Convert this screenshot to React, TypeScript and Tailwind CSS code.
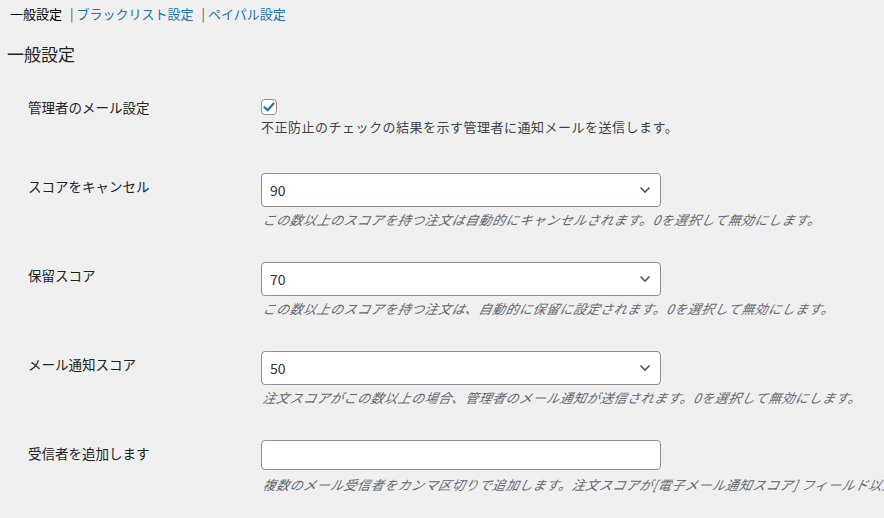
import React from "react";

const font = "font-['Noto_Sans_CJK_JP','Noto_Sans',sans-serif]";

const Chevron = () => (
  <svg width="12" height="8" viewBox="0 0 12 8" className="absolute right-[9px] top-1/2 -translate-y-1/2">
    <path d="M1.5 1.5 L6 6 L10.5 1.5" fill="none" stroke="#50575e" strokeWidth="1.6" />
  </svg>
);

const ScoreSelect = ({ value }: { value: string }) => (
  <div className="relative w-[400px] h-[34px] bg-white border border-[#8c8f94] rounded-[4px] flex items-center pl-[8px] text-[14px] text-[#2c3338]">
    {value}
    <Chevron />
  </div>
);

// Noto CJK has no italic, so slant it by hand
const Desc = ({ children, className = "" }: { children: React.ReactNode; className?: string }) => (
  <p
    className={`text-[13px] leading-[20px] tracking-[0.5px] italic text-[#646970] whitespace-nowrap -skew-x-12 origin-bottom-left ${className}`}
  >
    {children}
  </p>
);

const Row = ({ label, children, className = "" }: { label: string; children: React.ReactNode; className?: string }) => (
  <div className={`flex pl-[28px] ${className}`}>
    <div className="w-[233px] shrink-0 pt-[4px] text-[13.5px] leading-[18px] text-[#1d2327]">{label}</div>
    <div className="flex flex-col">{children}</div>
  </div>
);

const Sep = () => <span className="text-[#50575e] ml-[8px] mr-[3px]">|</span>;

export default function App() {
  return (
    <div className={`w-full h-[518px] overflow-hidden bg-[#f0f0f1] text-[#1d2327] ${font}`}>
      {/* tabs */}
      <div className="pt-[5px] pl-[10px] text-[13px] leading-[18px] whitespace-nowrap">
        <span className="text-[#000]">一般設定</span>
        <Sep />
        <span className="text-[#2271b1]">ブラックリスト設定</span>
        <Sep />
        <span className="text-[#2271b1]">ペイパル設定</span>
      </div>

      <h2 className="mt-[20px] pl-[7px] text-[17px] leading-[22px] text-[#1d2327]">一般設定</h2>

      {/* checkbox row */}
      <div className="flex pl-[28px] mt-[33px]">
        <div className="w-[233px] shrink-0 text-[13.5px] leading-[18px]">管理者のメール設定</div>
        <div className="flex flex-col">
          <div className="mt-[1px] w-[16px] h-[16px] bg-white border border-[#8c8f94] rounded-[4px] flex items-center justify-center">
            <svg width="12" height="10" viewBox="0 0 12 10">
              <path d="M1.5 5.2 L4.6 8.2 L10.6 1.6" fill="none" stroke="#2271b1" strokeWidth="2.2" strokeLinecap="round" strokeLinejoin="round" />
            </svg>
          </div>
          <p className="mt-[2px] text-[13px] leading-[20px] tracking-[0.5px] text-[#3c434a] whitespace-nowrap">
            不正防止のチェックの結果を示す管理者に通知メールを送信します。
          </p>
        </div>
      </div>

      <Row label="スコアをキャンセル" className="mt-[36px]">
        <ScoreSelect value="90" />
        <Desc className="mt-[3px]">この数以上のスコアを持つ注文は自動的にキャンセルされます。0を選択して無効にします。</Desc>
      </Row>

      <Row label="保留スコア" className="mt-[32px]">
        <ScoreSelect value="70" />
        <Desc className="mt-[3px]">この数以上のスコアを持つ注文は、自動的に保留に設定されます。0を選択して無効にします。</Desc>
      </Row>

      <Row label="メール通知スコア" className="mt-[32px]">
        <ScoreSelect value="50" />
        <Desc className="mt-[3px]">注文スコアがこの数以上の場合、管理者のメール通知が送信されます。0を選択して無効にします。</Desc>
      </Row>

      <Row label="受信者を追加します" className="mt-[32px]">
        <div className="w-[400px] h-[30px] bg-white border border-[#8c8f94] rounded-[4px]" />
        <Desc className="mt-[5px]">
          複数のメール受信者をカンマ区切りで追加します。注文スコアが[電子メール通知スコア] フィールド以上の場合
        </Desc>
      </Row>
    </div>
  );
}
